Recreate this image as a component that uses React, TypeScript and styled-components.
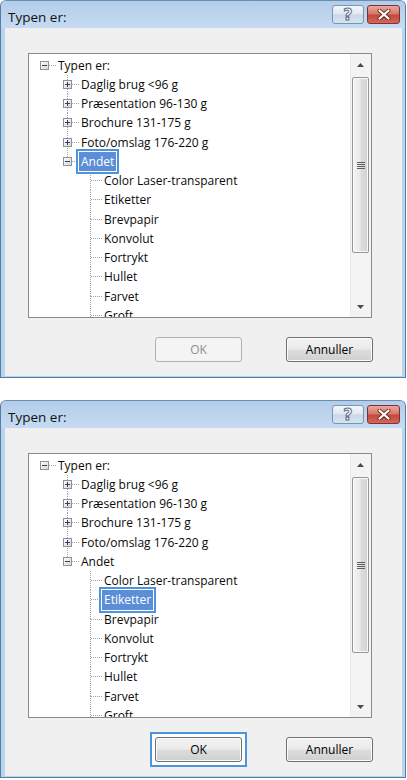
import React from "react"
import styled, { createGlobalStyle, css } from "styled-components"

const GlobalStyle = createGlobalStyle`
  html, body {
    margin: 0;
    padding: 0;
    background: #ffffff;
  }
  body {
    font-family: "Open Sans", "Noto Sans", Arial, sans-serif;
    font-size: 12px;
    color: #000;
  }
`

const ROW_H = 19.25
const DOT = "#a3a3a3"

const Page = styled.div`
  display: flex;
  flex-direction: column;
  gap: 22px;
  width: 407px;
`

const Window = styled.div`
  width: 406px;
  height: 378px;
  box-sizing: border-box;
  display: flex;
  flex-direction: column;
  background: #bcd3ec;
  border: 1px solid #4f7fa6;
  border-top-color: #6b8fb4;
  border-radius: 6px 6px 0 0;
`

const TitleBar = styled.div`
  height: 27px;
  display: flex;
  justify-content: space-between;
  align-items: flex-start;
  padding: 0 5px 0 7px;
  background: linear-gradient(to bottom, #b3cce8 0%, #bdd4ee 50%, #c6dbf1 100%);
  border-radius: 5px 5px 0 0;
`

const Title = styled.div`
  font-size: 13.5px;
  line-height: 18px;
  padding-top: 7px;
  color: #111;
`

const CaptionButtons = styled.div`
  display: flex;
  gap: 3px;
  padding-top: 4px;
`

const CaptionButton = styled.div<{ $close?: boolean }>`
  width: ${(p) => (p.$close ? 33 : 32)}px;
  height: 19px;
  box-sizing: border-box;
  display: flex;
  align-items: center;
  justify-content: center;
  border-radius: 3px;
  ${(p) =>
    p.$close
      ? css`
          border: 1px solid #7a3330;
          background: linear-gradient(to bottom, #e8a99e 0%, #d6786c 45%, #c7473c 55%, #d1685a 100%);
        `
      : css`
          border: 1px solid #7d93b0;
          background: linear-gradient(to bottom, #f4f7fb 0%, #dfe8f3 45%, #c9d8ea 55%, #d7e3f1 100%);
        `}
`

const HelpMark = styled.span`
  font-family: "DejaVu Sans", "Liberation Sans", sans-serif;
  font-weight: bold;
  font-size: 16px;
  line-height: 16px;
  color: #ffffff;
  -webkit-text-stroke: 1px #5d6f86;
`

const Client = styled.div`
  flex: 1;
  margin: 0 3px 1px 4px;
  background: #f0f0f0;
  display: flex;
  flex-direction: column;
  padding: 25px 30px 0 23px;
`

const TreeBox = styled.div`
  width: 344px;
  height: 265px;
  box-sizing: border-box;
  border: 1px solid #838a93;
  background: #ffffff;
  display: flex;
`

const TreeList = styled.div`
  flex: 1;
  overflow: hidden;
  padding: 1.5px 0 0 4px;
`

const Row = styled.div`
  display: flex;
  align-items: stretch;
  height: ${ROW_H}px;
`

const vLine = (size: string, pos: string) =>
  `repeating-linear-gradient(to bottom, ${DOT} 0 1px, transparent 1px 2px) ${pos} / 1px ${size} no-repeat`

const hLine = `repeating-linear-gradient(to right, ${DOT} 0 1px, transparent 1px 2px) right 50% / 11px 1px no-repeat`

const Guide = styled.div<{ $line: boolean }>`
  width: 23px;
  flex: none;
  background: ${(p) => (p.$line ? vLine("100%", "11px 0") : "none")};
`

const Joint = styled.div<{ $top: boolean; $bottom: boolean }>`
  width: 23px;
  flex: none;
  display: flex;
  align-items: center;
  justify-content: center;
  background: ${(p) =>
    [
      hLine,
      p.$top ? vLine("50%", "11px 0") : null,
      p.$bottom ? vLine("50%", "11px 100%") : null,
    ]
      .filter(Boolean)
      .join(", ")};
`

const ExpanderBox = styled.svg`
  display: block;
  margin-left: -1px;
`

const Label = styled.div<{ $selected?: boolean }>`
  padding: 0 2px;
  line-height: ${ROW_H}px;
  white-space: nowrap;
  color: #0a0a0a;
  ${(p) =>
    p.$selected &&
    css`
      position: relative;
      z-index: 1;
      color: #ffffff;
      background: #5b8ed6;
      box-shadow: 0 0 0 1px #ffffff, 0 0 0 3px #4a95dc;
    `}
`

const Scrollbar = styled.div`
  width: 21px;
  flex: none;
  display: flex;
  flex-direction: column;
  background: #f3f3f3;
  box-shadow: inset 1px 0 0 #e9e9e9;
`

const ArrowButton = styled.div`
  height: 21px;
  flex: none;
  display: flex;
  align-items: center;
  justify-content: center;
`

const Track = styled.div`
  flex: 1;
  display: flex;
  flex-direction: column;
  padding: 2px 2px 0 2px;
`

const Thumb = styled.div`
  height: 176px;
  box-sizing: border-box;
  border: 1px solid #989898;
  border-radius: 2px;
  background: linear-gradient(to right, #f4f4f4 0%, #e9e9e9 45%, #dcdcdc 55%, #d3d3d3 100%);
  box-shadow: inset 0 0 0 1px #f9f9f9;
  display: flex;
  align-items: center;
  justify-content: center;
`

const ButtonRow = styled.div`
  display: flex;
  justify-content: flex-end;
  align-items: center;
  gap: 44px;
  margin-top: 19px;
  width: 345px;
`

const FocusRing = styled.div`
  margin: -5px;
  padding: 3px;
  border: 2px solid #4a95dc;
  background: #ffffff;
  display: flex;
`

const PushButton = styled.div<{ $disabled?: boolean }>`
  width: 87px;
  height: 25px;
  box-sizing: border-box;
  display: flex;
  align-items: center;
  justify-content: center;
  border-radius: 3px;
  font-size: 12px;
  ${(p) =>
    p.$disabled
      ? css`
          border: 1px solid #adb2b5;
          background: #f4f4f4;
          color: #8f8f8f;
        `
      : css`
          border: 1px solid #707070;
          background: linear-gradient(to bottom, #f2f2f2 0%, #ebebeb 48%, #dddddd 52%, #cfcfcf 100%);
          box-shadow: inset 0 0 0 1px #fbfbfb;
          color: #000;
        `}
`

type TreeItem = {
  label: string
  guides: boolean[]
  top: boolean
  bottom: boolean
  expander?: "plus" | "minus"
}

const l1 = (label: string, last = false): TreeItem => ({
  label,
  guides: [false],
  top: true,
  bottom: !last,
  expander: last ? "minus" : "plus",
})

const l2 = (label: string): TreeItem => ({
  label,
  guides: [false, false],
  top: true,
  bottom: true,
})

const items: TreeItem[] = [
  { label: "Typen er:", guides: [], top: false, bottom: false, expander: "minus" },
  l1("Daglig brug <96 g"),
  l1("Præsentation 96-130 g"),
  l1("Brochure 131-175 g"),
  l1("Foto/omslag 176-220 g"),
  l1("Andet", true),
  l2("Color Laser-transparent"),
  l2("Etiketter"),
  l2("Brevpapir"),
  l2("Konvolut"),
  l2("Fortrykt"),
  l2("Hullet"),
  l2("Farvet"),
  l2("Groft"),
]

const Expander = ({ kind }: { kind: "plus" | "minus" }) => (
  <ExpanderBox width="9" height="9" viewBox="0 0 9 9">
    <defs>
      <linearGradient id={`exp-${kind}`} x1="0" y1="0" x2="1" y2="1">
        <stop offset="0" stopColor="#ffffff" />
        <stop offset="1" stopColor="#d6d6ce" />
      </linearGradient>
    </defs>
    <rect x="0.5" y="0.5" width="8" height="8" fill={`url(#exp-${kind})`} stroke="#8e9296" />
    <rect x="2" y="4" width="5" height="1" fill="#2b3f73" />
    {kind === "plus" && <rect x="4" y="2" width="1" height="5" fill="#2b3f73" />}
  </ExpanderBox>
)

const CloseGlyph = () => (
  <svg width="14" height="11" viewBox="0 0 14 11">
    <path d="M2.5 1.5 L11.5 9.5 M11.5 1.5 L2.5 9.5" stroke="#6e2622" strokeWidth="4" strokeLinecap="round" />
    <path d="M2.5 1.5 L11.5 9.5 M11.5 1.5 L2.5 9.5" stroke="#ffffff" strokeWidth="2.2" strokeLinecap="round" />
  </svg>
)

const UpArrow = () => (
  <svg width="7" height="4" viewBox="0 0 7 4">
    <path d="M0 4 L3.5 0 L7 4 Z" fill="#4a4a4a" />
  </svg>
)

const DownArrow = () => (
  <svg width="7" height="4" viewBox="0 0 7 4">
    <path d="M0 0 L7 0 L3.5 4 Z" fill="#4a4a4a" />
  </svg>
)

const Grip = () => (
  <svg width="8" height="7" viewBox="0 0 8 7">
    {[0, 2, 4, 6].map((y) => (
      <rect key={y} x="0" y={y} width="8" height="1" fill="#5f5f5f" />
    ))}
  </svg>
)

const Dialog = ({ selected, okEnabled }: { selected: string; okEnabled: boolean }) => (
  <Window>
    <TitleBar>
      <Title>Typen er:</Title>
      <CaptionButtons>
        <CaptionButton>
          <HelpMark>?</HelpMark>
        </CaptionButton>
        <CaptionButton $close>
          <CloseGlyph />
        </CaptionButton>
      </CaptionButtons>
    </TitleBar>
    <Client>
      <TreeBox>
        <TreeList>
          {items.map((item) => (
            <Row key={item.label}>
              {item.guides.map((g, i) => (
                <Guide key={i} $line={g} />
              ))}
              <Joint $top={item.top} $bottom={item.bottom}>
                {item.expander && <Expander kind={item.expander} />}
              </Joint>
              <Label $selected={item.label === selected}>{item.label}</Label>
            </Row>
          ))}
        </TreeList>
        <Scrollbar>
          <ArrowButton>
            <UpArrow />
          </ArrowButton>
          <Track>
            <Thumb>
              <Grip />
            </Thumb>
          </Track>
          <ArrowButton>
            <DownArrow />
          </ArrowButton>
        </Scrollbar>
      </TreeBox>
      <ButtonRow>
        {okEnabled ? (
          <FocusRing>
            <PushButton>OK</PushButton>
          </FocusRing>
        ) : (
          <PushButton $disabled>OK</PushButton>
        )}
        <PushButton>Annuller</PushButton>
      </ButtonRow>
    </Client>
  </Window>
)

export default function App() {
  return (
    <>
      <GlobalStyle />
      <Page>
        <Dialog selected="Andet" okEnabled={false} />
        <Dialog selected="Etiketter" okEnabled={true} />
      </Page>
    </>
  )
}
